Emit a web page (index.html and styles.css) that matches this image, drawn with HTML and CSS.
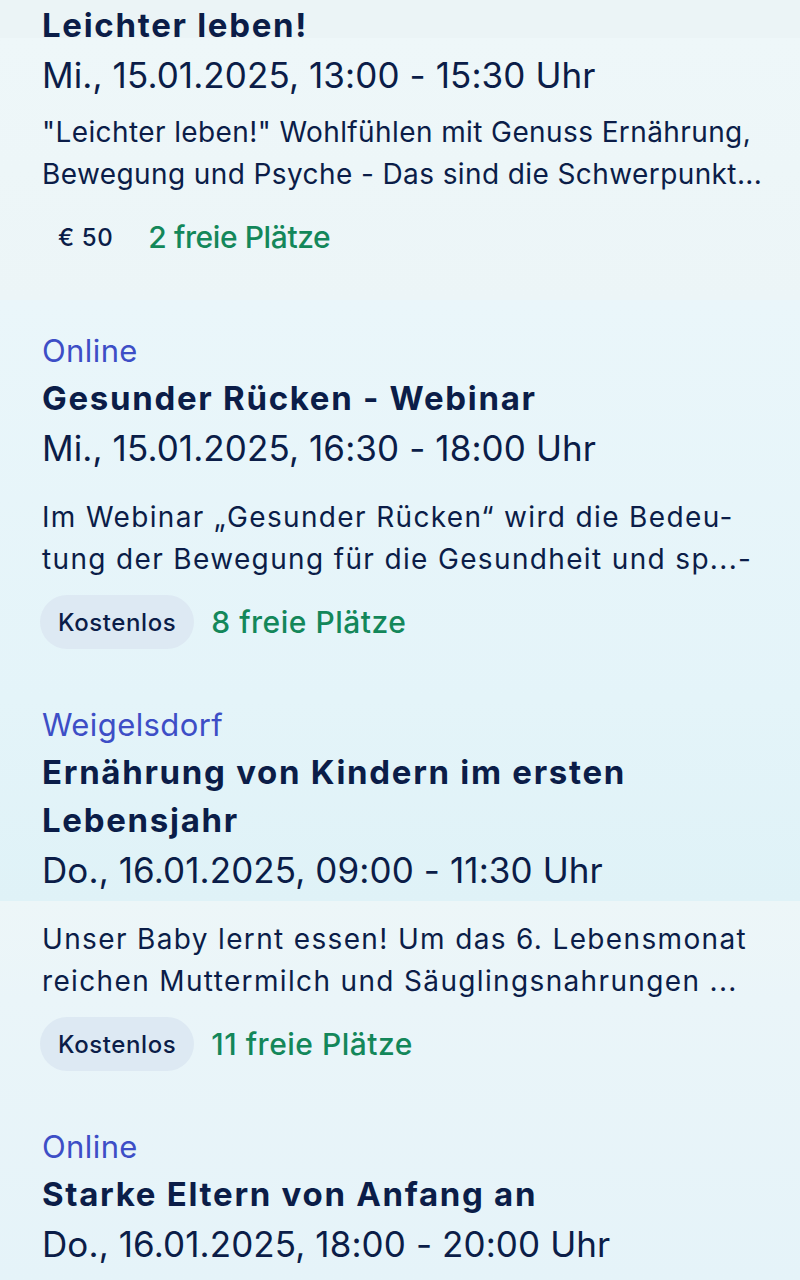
FILE: index.html
```html
<!DOCTYPE html>
<html lang="de">
<head>
    <meta charset="UTF-8">
    <meta name="viewport" content="width=device-width, initial-scale=1.0">
    <title>Kurse</title>
    <link rel="stylesheet" href="styles.css">
</head>
<body>
    <main class="event-list">
        <article class="event event-first">
            <h3 class="event-title">Leichter leben!</h3>
            <p class="event-date">Mi., 15.01.2025, 13:00 - 15:30 Uhr</p>
            <p class="event-desc">"Leichter leben!" Wohlfühlen mit Genuss Ernährung,<br>Bewegung und Psyche - Das sind die Schwerpunkt...</p>
            <div class="event-meta">
                <span class="chip chip-plain">€ 50</span>
                <span class="seats">2 freie Plätze</span>
            </div>
        </article>

        <article class="event">
            <p class="event-location">Online</p>
            <h3 class="event-title">Gesunder Rücken - Webinar</h3>
            <p class="event-date">Mi., 15.01.2025, 16:30 - 18:00 Uhr</p>
            <p class="event-desc">Im Webinar „Gesunder Rücken“ wird die Bedeu-<br>tung der Bewegung für die Gesundheit und sp...-</p>
            <div class="event-meta">
                <span class="chip">Kostenlos</span>
                <span class="seats">8 freie Plätze</span>
            </div>
        </article>

        <article class="event">
            <p class="event-location">Weigelsdorf</p>
            <h3 class="event-title">Ernährung von Kindern im ersten<br>Lebensjahr</h3>
            <p class="event-date">Do., 16.01.2025, 09:00 - 11:30 Uhr</p>
            <p class="event-desc">Unser Baby lernt essen! Um das 6. Lebensmonat<br>reichen Muttermilch und Säuglingsnahrungen ...</p>
            <div class="event-meta">
                <span class="chip">Kostenlos</span>
                <span class="seats">11 freie Plätze</span>
            </div>
        </article>

        <article class="event">
            <p class="event-location">Online</p>
            <h3 class="event-title">Starke Eltern von Anfang an</h3>
            <p class="event-date">Do., 16.01.2025, 18:00 - 20:00 Uhr</p>
        </article>
    </main>
</body>
</html>
```
FILE: styles.css
```css
html, body {
    height: 100%;
}

body {
    margin: 0;
    padding: 0;
    font-family: 'Inter', 'Noto Sans', sans-serif;
    color: #0b1d48;
    background: linear-gradient(180deg,
        #ebf4f6 0px, #ebf4f6 38px,
        #eef7f9 38px, #ecf5f7 300px,
        #eaf6fa 300px, #e4f4f9 700px, #dff2f7 901px,
        #edf6f8 901px, #eaf5f9 1000px, #e5f3f9 1280px);
    background-repeat: no-repeat;
    overflow: hidden;
}

.event-list {
    padding: 1px 42px 0;
}

.event {
    padding-bottom: 53px;
}

.event p,
.event h3 {
    margin: 0;
}

.event-location {
    font-size: 31px;
    line-height: 46px;
    letter-spacing: 0.4px;
    color: #3d4ec6;
}

.event-title {
    font-size: 33px;
    line-height: 48px;
    font-weight: 700;
    letter-spacing: 1.7px;
    color: #0b1d48;
}

.event-date {
    font-size: 35px;
    line-height: 52px;
    letter-spacing: 0.1px;
    color: #0b1d48;
}

.event-desc {
    margin-top: 22px !important;
    font-size: 28px;
    line-height: 42px;
    letter-spacing: 1.35px;
    color: #0b1d48;
    white-space: nowrap;
}

.event-meta {
    display: flex;
    align-items: center;
    gap: 17px;
    margin-top: 15px;
    margin-left: -2px;
}

.chip {
    display: inline-flex;
    align-items: center;
    height: 54px;
    padding: 0 18px;
    border-radius: 27px;
    background: #dde9f3;
    font-size: 24px;
    font-weight: 500;
    letter-spacing: 0.6px;
    color: #0b1d48;
}

.chip-plain {
    background: transparent;
}

.seats {
    font-size: 30px;
    font-weight: 500;
    letter-spacing: 0.5px;
    color: #13875a;
}

/* first card is cut off at the top of the list */
.event-first {
    padding-bottom: 64px;
}

.event-first .event-desc {
    margin-top: 10px !important;
    letter-spacing: 0.4px;
}

.event-first .seats {
    letter-spacing: -0.4px;
}
```
